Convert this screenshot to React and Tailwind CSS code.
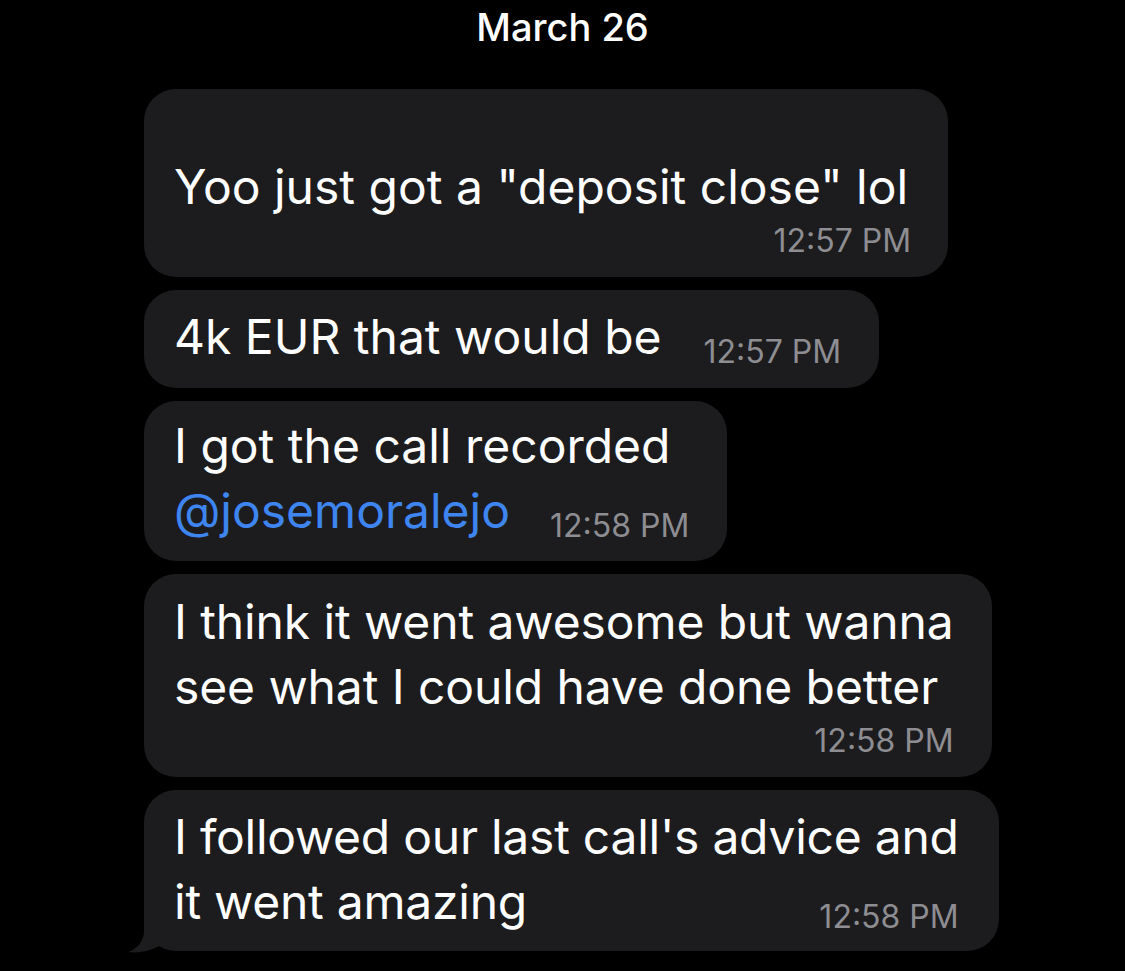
import React from "react";

const font = { fontFamily: "Inter, 'Noto Sans', sans-serif" };

function Time({ children, className = "" }) {
  return (
    <span className={"whitespace-nowrap text-[32px] text-[#8d8d92] " + className}>
      {children}
    </span>
  );
}

export default function App() {
  return (
    <div className="min-h-[971px] w-full bg-black text-white" style={font}>
      <div className="pt-[3px] text-center text-[38px] font-medium leading-[48px]">March 26</div>
      <div className="mt-[38px] flex flex-col items-start gap-[13px] pl-[144px] text-[48px] leading-[65px]">
        {/* Bubble 1 */}
        <div className="w-fit rounded-[32px] bg-[#1c1c1e] pl-[30px] pr-[40px] pt-[14px] pb-[16px]">
          <div className="h-[51px]" />
          <div className="whitespace-nowrap">Yoo just got a "deposit close" lol</div>
          <div className="mt-[2px] -mr-[3px] flex justify-end leading-[40px]">
            <Time>12:57 PM</Time>
          </div>
        </div>

        {/* Bubble 2 */}
        <div className="w-fit rounded-[32px] bg-[#1c1c1e] pl-[30px] pr-[38px] pt-[14px] pb-[19px]">
          <div className="flex items-end whitespace-nowrap">
            <span>4k EUR that would be</span>
            <Time className="ml-[42px] leading-[34px]">12:57 PM</Time>
          </div>
        </div>

        {/* Bubble 3 */}
        <div className="w-fit rounded-[32px] bg-[#1c1c1e] pl-[30px] pr-[38px] pt-[12px] pb-[18px]">
          <div className="whitespace-nowrap">I got the call recorded</div>
          <div className="flex items-end whitespace-nowrap">
            <span className="text-[#3e85f0]">@josemoralejo</span>
            <Time className="ml-[40px] leading-[34px]">12:58 PM</Time>
          </div>
        </div>

        {/* Bubble 4 */}
        <div className="w-fit rounded-[32px] bg-[#1c1c1e] pl-[30px] pr-[38px] pt-[15px] pb-[16px]">
          <div className="whitespace-nowrap tracking-[-0.1px]">I think it went awesome but wanna</div>
          <div className="whitespace-nowrap tracking-[-0.1px]">see what I could have done better</div>
          <div className="mt-[2px] flex justify-end leading-[40px]">
            <Time>12:58 PM</Time>
          </div>
        </div>

        {/* Bubble 5 */}
        <div className="relative w-fit rounded-[32px] bg-[#1c1c1e] pl-[30px] pr-[40px] pt-[14px] pb-[17px]">
          <svg
            className="absolute left-[-17px] bottom-[-3px]"
            width="50"
            height="50"
            viewBox="0 0 50 50"
          >
            <path
              d="M17 5 L17 27 C17 37 10 45 1 48 C13 49.5 25 46.5 36 40 L48 25 L48 5 Z"
              fill="#1c1c1e"
            />
          </svg>
          <div className="relative whitespace-nowrap tracking-[-0.25px]">I followed our last call's advice and</div>
          <div className="relative flex items-end justify-between whitespace-nowrap">
            <span className="tracking-[-0.25px]">it went amazing</span>
            <Time className="leading-[34px]">12:58 PM</Time>
          </div>
        </div>
      </div>
    </div>
  );
}
